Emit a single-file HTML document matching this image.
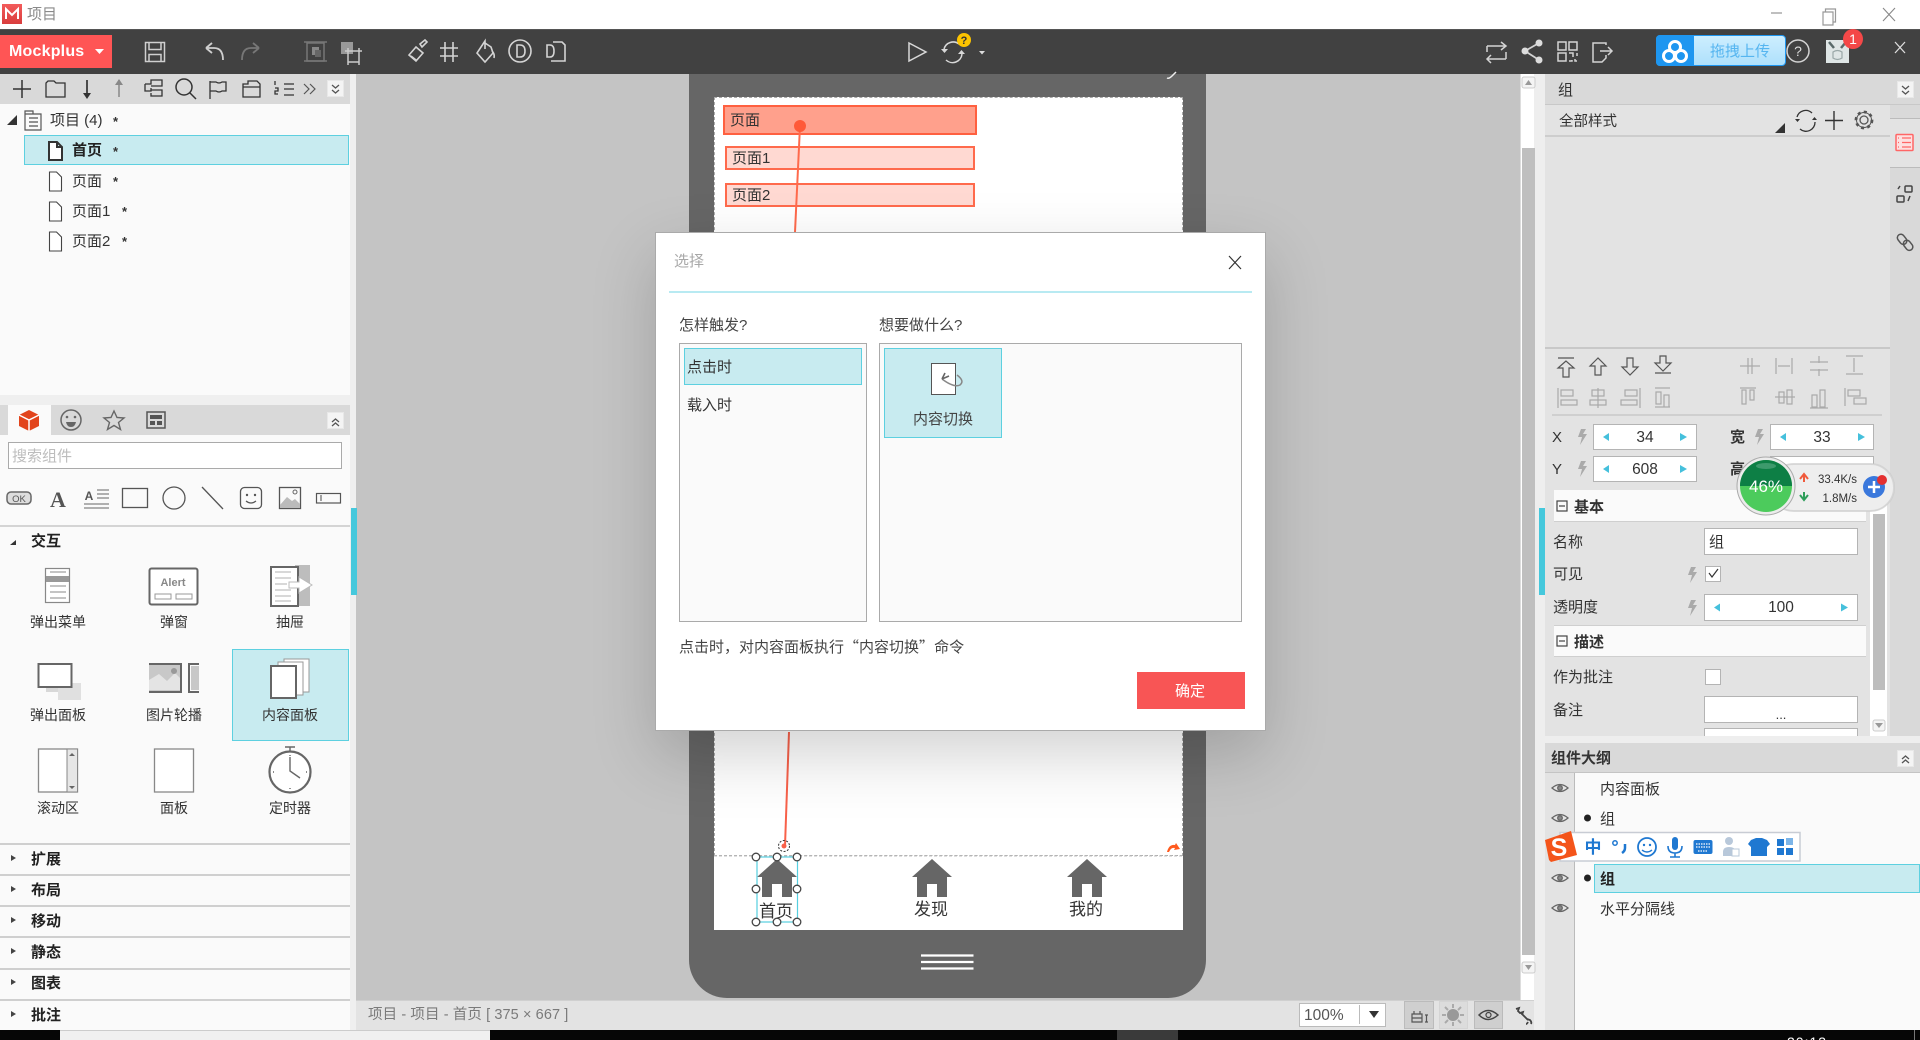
<!DOCTYPE html>
<html lang="zh"><head><meta charset="utf-8"><title>项目</title>
<style>
html,body{margin:0;padding:0;background:#000;}
#app{position:relative;width:1920px;height:1040px;overflow:hidden;background:#c4c4c4;font-family:"Liberation Sans","Noto Sans CJK SC",sans-serif;font-size:15px;color:#333;filter:blur(.35px);}
.b{position:absolute;box-sizing:border-box;}
.t{position:absolute;line-height:20px;height:20px;white-space:nowrap;margin-top:1px;}
.c{transform:translateX(-50%);}
.g{font-size:14px;}
.s{font-size:13px;font-weight:700;}
.bd{font-weight:700;color:#222;}
.inp{position:absolute;box-sizing:border-box;background:#fff;border:1.5px solid #b4b4b4;}
.sel{position:absolute;box-sizing:border-box;background:#c8ebf0;border:1.5px solid #5dd0e0;}
.chev{position:absolute;box-sizing:border-box;width:17px;height:17px;background:#f4f4f4;border:1px solid #e8e8e8;}
svg{position:absolute;left:0;top:0;overflow:visible;}
</style></head><body>
<div id="app">
<!-- title bar -->
<div class="b" style="left:0;top:0;width:1920px;height:29px;background:#fff"></div>
<div class="b" style="left:2px;top:4px;width:20px;height:20px;background:linear-gradient(#f35b5b,#d83d3d)"></div>
<div class="t" style="left:27px;top:4px;color:#8a8a8a;font-size:15px">项目</div>
<!-- toolbar -->
<div class="b" style="left:0;top:29px;width:1920px;height:45px;background:#414141;border-top:1px solid #555"></div>
<div class="b" style="left:0;top:35px;width:112px;height:33px;background:#ff5555"></div>
<div class="t" style="left:9px;top:41px;color:#fff;font-weight:700;font-size:16px;letter-spacing:.2px">Mockplus</div>
<div class="b" style="left:1656px;top:35px;width:130px;height:31px;background:linear-gradient(#cdeeff,#aee0fb);border:1.5px solid #1e96f0;border-radius:4px"></div>
<div class="b" style="left:1656px;top:35px;width:38px;height:31px;background:#1e96f0;border-radius:4px 0 0 4px"></div>
<div class="t" style="left:1710px;top:41px;color:#55b5f0;font-size:15px">拖拽上传</div>
<!-- left panel -->
<div class="b" style="left:0;top:74px;width:350px;height:956px;background:#fafafa"></div>
<div class="b" style="left:350px;top:74px;width:6px;height:956px;background:#efefef"></div>
<div class="b" style="left:0;top:74px;width:350px;height:30px;background:#d9d9d9"></div>
<div class="chev" style="left:327px;top:80px"></div>
<div class="t" style="left:50px;top:110px">项目 (4)</div>
<div class="t s" style="left:113px;top:111px">*</div>
<div class="sel" style="left:24px;top:135px;width:325px;height:30px;border-width:1.5px"></div>
<div class="t bd" style="left:72px;top:140px">首页</div>
<div class="t s" style="left:113px;top:141px">*</div>
<div class="t" style="left:72px;top:171px">页面</div>
<div class="t s" style="left:113px;top:171px">*</div>
<div class="t" style="left:72px;top:201px">页面1</div>
<div class="t s" style="left:122px;top:201px">*</div>
<div class="t" style="left:72px;top:231px">页面2</div>
<div class="t s" style="left:122px;top:231px">*</div>
<div class="b" style="left:0;top:395px;width:350px;height:10px;background:#efefef"></div>
<div class="b" style="left:0;top:405px;width:350px;height:30px;background:#d9d9d9"></div>
<div class="b" style="left:8px;top:405px;width:43px;height:30px;background:#fafafa"></div>
<div class="chev" style="left:327px;top:412px"></div>
<div class="inp" style="left:8px;top:442px;width:334px;height:27px;border-color:#aaa"></div>
<div class="t" style="left:12px;top:446px;color:#bdbdbd">搜索组件</div>
<div class="b" style="left:0;top:525px;width:350px;height:2px;background:#d4d4d4"></div>
<div class="t bd" style="left:31px;top:531px">交互</div>
<div class="sel" style="left:232px;top:649px;width:117px;height:92px"></div>
<div class="t c g" style="left:58px;top:611px">弹出菜单</div>
<div class="t c g" style="left:174px;top:611px">弹窗</div>
<div class="t c g" style="left:290px;top:611px">抽屉</div>
<div class="t c g" style="left:58px;top:704px">弹出面板</div>
<div class="t c g" style="left:174px;top:704px">图片轮播</div>
<div class="t c g" style="left:290px;top:704px">内容面板</div>
<div class="t c g" style="left:58px;top:797px">滚动区</div>
<div class="t c g" style="left:174px;top:797px">面板</div>
<div class="t c g" style="left:290px;top:797px">定时器</div>
<div class="b" style="left:0;top:843px;width:350px;height:1.5px;background:#cfcfcf"></div>
<div class="b" style="left:0;top:874px;width:350px;height:1.5px;background:#cfcfcf"></div>
<div class="b" style="left:0;top:905px;width:350px;height:1.5px;background:#cfcfcf"></div>
<div class="b" style="left:0;top:936px;width:350px;height:1.5px;background:#cfcfcf"></div>
<div class="b" style="left:0;top:968px;width:350px;height:1.5px;background:#cfcfcf"></div>
<div class="b" style="left:0;top:999px;width:350px;height:1.5px;background:#cfcfcf"></div>
<div class="t bd" style="left:31px;top:849px">扩展</div>
<div class="t bd" style="left:31px;top:880px">布局</div>
<div class="t bd" style="left:31px;top:911px">移动</div>
<div class="t bd" style="left:31px;top:942px">静态</div>
<div class="t bd" style="left:31px;top:973px">图表</div>
<div class="t bd" style="left:31px;top:1005px">批注</div>
<div class="b" style="left:351px;top:508px;width:6px;height:87px;background:#45c8dc"></div>

<!-- canvas & phone -->
<div class="b" style="left:689px;top:74px;width:517px;height:924px;background:#666;border-radius:0 0 38px 38px"></div>
<div class="b" style="left:714px;top:97px;width:468.5px;height:833px;background:#fff"></div>
<div class="b" style="left:714px;top:97px;width:468.5px;height:759px;border:1px dashed #aaa"></div>
<div class="b" style="left:723px;top:105px;width:254px;height:30px;background:#ffa08c;border:2.5px solid #ff6040"></div>
<div class="t" style="left:730px;top:110px;color:#333;font-size:15px">页面</div>
<div class="b" style="left:725px;top:146px;width:250px;height:24px;background:#ffd9d2;border:2.5px solid #ff6a4c"></div>
<div class="t" style="left:732px;top:148px;font-size:15px">页面1</div>
<div class="b" style="left:725px;top:183px;width:250px;height:24px;background:#ffd9d2;border:2.5px solid #ff6a4c"></div>
<div class="t" style="left:732px;top:185px;font-size:15px">页面2</div>
<div class="t c" style="left:776px;top:901px;font-size:17px;color:#333">首页</div>
<div class="t c" style="left:931px;top:899px;font-size:17px;color:#333">发现</div>
<div class="t c" style="left:1086px;top:899px;font-size:17px;color:#333">我的</div>

<!-- status bar -->
<div class="b" style="left:356px;top:1000px;width:1189px;height:30px;background:#e3e3e3;border-top:1px solid #d0d0d0"></div>
<div class="t" style="left:368px;top:1004px;color:#7a7a7a;font-size:14.5px;letter-spacing:.1px">项目 - 项目 - 首页 [ 375 × 667 ]</div>
<div class="inp" style="left:1299px;top:1003px;width:87px;height:24px;border-color:#bbb"></div>
<div class="t" style="left:1304px;top:1005px;color:#555;font-size:15.5px">100%</div>
<div class="b" style="left:1359px;top:1005px;width:1px;height:19px;background:#bbb"></div>
<div class="b" style="left:1404px;top:1001px;width:30px;height:28px;background:#cfcfcf;border:1px solid #bbb"></div>
<div class="b" style="left:1439px;top:1001px;width:29px;height:28px;background:#dcdcdc;border:1px solid #d4d4d4"></div>
<div class="b" style="left:1474px;top:1001px;width:29px;height:28px;background:#cfcfcf;border:1px solid #bbb"></div>

<!-- canvas scrollbar -->
<div class="b" style="left:1520px;top:74px;width:15px;height:926px;background:#fff;border-left:1px solid #ddd"></div>
<div class="b" style="left:1534px;top:74px;width:11px;height:956px;background:#eee"></div>
<div class="b" style="left:1522px;top:148px;width:13px;height:807px;background:#bfbfbf"></div>

<!-- right panel -->
<div class="b" style="left:1545px;top:74px;width:375px;height:662px;background:#e3e3e3"></div>
<div class="b" style="left:1890px;top:105px;width:30px;height:631px;background:#d9d9d9"></div>
<div class="b" style="left:1890px;top:118px;width:30px;height:50px;background:#e3e3e3;border-top:1px solid #bbb;border-bottom:1px solid #bbb"></div>
<div class="b" style="left:1545px;top:74px;width:375px;height:31px;background:#d9d9d9;border-bottom:1.5px solid #c8c8c8"></div>
<div class="t" style="left:1558px;top:80px;font-size:15px">组</div>
<div class="chev" style="left:1897px;top:81px"></div>
<div class="t" style="left:1559px;top:111px;font-size:14.5px">全部样式</div>
<div class="b" style="left:1545px;top:135px;width:345px;height:2px;background:#cdcdcd"></div>
<div class="b" style="left:1545px;top:347px;width:345px;height:1.5px;background:#c8c8c8"></div>
<div class="b" style="left:1552px;top:414px;width:330px;height:1.5px;background:#cfcfcf"></div>
<div class="t" style="left:1552px;top:427px;font-size:15px">X</div>
<div class="t" style="left:1552px;top:459px;font-size:15px">Y</div>
<div class="inp" style="left:1593px;top:424px;width:104px;height:26px"></div>
<div class="t c" style="left:1645px;top:427px;font-size:15.5px">34</div>
<div class="t bd" style="left:1730px;top:427px;color:#333">宽</div>
<div class="inp" style="left:1770px;top:424px;width:104px;height:26px"></div>
<div class="t c" style="left:1822px;top:427px;font-size:15.5px">33</div>
<div class="inp" style="left:1593px;top:456px;width:104px;height:26px"></div>
<div class="t c" style="left:1645px;top:459px;font-size:15.5px">608</div>
<div class="t bd" style="left:1730px;top:459px;color:#333">高</div>
<div class="inp" style="left:1770px;top:456px;width:104px;height:26px"></div>
<div class="b" style="left:1554px;top:490px;width:312px;height:32px;background:#fafafa;border-bottom:1.5px solid #cfcfcf"></div>
<div class="t bd" style="left:1574px;top:497px;color:#333">基本</div>
<div class="t" style="left:1553px;top:532px">名称</div>
<div class="inp" style="left:1704px;top:528px;width:154px;height:27px"></div>
<div class="t" style="left:1709px;top:532px">组</div>
<div class="t" style="left:1553px;top:564px">可见</div>
<div class="inp" style="left:1705px;top:566px;width:16px;height:16px"></div>
<div class="t" style="left:1553px;top:597px">透明度</div>
<div class="inp" style="left:1704px;top:594px;width:154px;height:26.5px"></div>
<div class="t c" style="left:1781px;top:597px;font-size:15.5px">100</div>
<div class="b" style="left:1554px;top:625px;width:312px;height:32px;background:#fafafa;border-bottom:1.5px solid #cfcfcf;border-top:1.5px solid #cfcfcf"></div>
<div class="t bd" style="left:1574px;top:632px;color:#333">描述</div>
<div class="t" style="left:1553px;top:667px">作为批注</div>
<div class="inp" style="left:1705px;top:669px;width:16px;height:16px"></div>
<div class="t" style="left:1553px;top:700px">备注</div>
<div class="inp" style="left:1704px;top:696px;width:154px;height:27px"></div>
<div class="t c" style="left:1781px;top:704px;font-size:13px">...</div>
<div class="inp" style="left:1704px;top:728px;width:154px;height:9px;border-bottom:0"></div>
<div class="b" style="left:1870px;top:500px;width:17px;height:236px;background:#fff"></div>
<div class="b" style="left:1873px;top:514px;width:12px;height:176px;background:#bdbdbd"></div>
<div class="b" style="left:1539px;top:508px;width:6px;height:87px;background:#45c8dc"></div>
<div class="b" style="left:1545px;top:736px;width:375px;height:7px;background:#eee"></div>
<!-- outline -->
<div class="b" style="left:1545px;top:743px;width:375px;height:30px;background:#d9d9d9;border-bottom:1.5px solid #c4c4c4"></div>
<div class="t bd" style="left:1551px;top:748px;color:#333">组件大纲</div>
<div class="chev" style="left:1897px;top:750px"></div>
<div class="b" style="left:1545px;top:773px;width:30px;height:257px;background:#e3e3e3;border-right:1.5px solid #bbb"></div>
<div class="b" style="left:1575px;top:773px;width:345px;height:257px;background:#fafafa"></div>
<div class="t" style="left:1600px;top:779px">内容面板</div>
<div class="t" style="left:1600px;top:809px">组</div>
<div class="sel" style="left:1594px;top:864px;width:326px;height:29px"></div>
<div class="t bd" style="left:1600px;top:869px">组</div>
<div class="t" style="left:1600px;top:899px">水平分隔线</div>

<!-- bottom taskbar -->
<div class="b" style="left:0;top:1030px;width:1920px;height:10px;background:#060606"></div>
<div class="b" style="left:60px;top:1030px;width:430px;height:10px;background:#f0f0f0;border-top:1px solid #ccc"></div>
<div class="b" style="left:1117px;top:1030px;width:61px;height:10px;background:#3a3a3a"></div>
<div class="b" style="left:1914px;top:1030px;width:1px;height:10px;background:#777"></div>
<div class="t" style="left:1787px;top:1031px;color:#fff;font-size:14px;letter-spacing:1px">20:13</div>

<!-- ICONS -->
<svg width="1920" height="1040" viewBox="0 0 1920 1040" fill="none">
<!-- title M -->
<path d="M6 19V9l6 6 6-6v10" stroke="#fff" stroke-width="2"/>
<path d="M1771 13h11M1823 12h10v13h-10zM1825.500 12V9h10v13h-2.500" stroke="#999" stroke-width="1.200"/>
<path d="M1883 8l12 13M1895 8l-12 13" stroke="#888" stroke-width="1.100"/>
<path d="M95 49h9l-4.500 5z" fill="#fff"/>
<!-- toolbar left icons -->
<g stroke="#cfcfcf" stroke-width="1.500">
<path d="M145.500 42.500h19v19h-19zM149 42.500v7h12v-7M149 61.500v-7h12v7"/>
<path d="M206 48l6-5M206 48l6 5M206 48h8q9 0 9 12" stroke-width="1.800"/>
</g>
<path d="M259 48l-6-5M259 48l-6 5M259 48h-8q-9 0-9 12" stroke="#777" stroke-width="1.800"/>
<g stroke="#777" stroke-width="1.500"><rect x="307" y="43" width="17" height="18"/><path d="M304 42h23M304 61h23"/></g>
<rect x="312" y="47" width="7" height="8" fill="#888"/><rect x="315" y="50" width="6" height="7" fill="#666"/>
<rect x="341" y="42" width="12" height="12" fill="#999"/>
<g stroke="#ccc" stroke-width="1.500"><path d="M348 51h11v11h-11zM345 51h17M348 48v17M359 48v17"/></g>
<g stroke="#d4d4d4" stroke-width="1.600">
<path d="M420 44l5-4 2 2-5 5zM416 47l7 6-7 8-7-6zM411 56l5 4"/>
<path d="M445 42v20M453 42v20M440 48h18M440 56h18"/>
<path d="M485 41l-8 12 8 9 8-9-2-6-6-4zM485 41v8M492 51q3 3 2 7"/>
<circle cx="520" cy="51" r="11"/>
<path d="M517 45h3q5 0 5 6t-5 6h-3z"/>
<path d="M553 42h9l3 3v16h-14M547 45v12h3q4 0 4-6t-4-6z"/>
</g>
<!-- play / sync -->
<path d="M909 43l17 9-17 9z" stroke="#d8d8d8" stroke-width="1.500"/>
<path d="M944 49a9.500 9.500 0 0 1 15-5M962 54a9.500 9.500 0 0 1-16 6" stroke="#d8d8d8" stroke-width="1.500"/>
<path d="M941 49h7l-3.500 4zM958 54h7l-3.500-4z" fill="#d8d8d8"/>
<circle cx="964" cy="40" r="7" fill="#fdc400"/>
<text x="964" y="44" text-anchor="middle" font-size="11" font-weight="700" fill="#333" font-family="Liberation Sans">?</text>
<path d="M979 51h6l-3 3.500z" fill="#ddd"/>
<!-- right toolbar -->
<g stroke="#d4d4d4" stroke-width="1.500">
<path d="M1487 46h19M1501 42l5 4-5 4M1487 46v6M1506 52v7M1487 59h19M1491 55l-4 4 4 4"/>
<path d="M1525 51l14-8M1525 51l14 9" stroke-width="1.800"/>
<rect x="1558" y="42" width="8" height="8"/><rect x="1569" y="42" width="8" height="8"/><rect x="1558" y="53" width="8" height="8"/>
<path d="M1569 53h4v4M1577 53v3M1569 61h3v-1M1575 59v2h2"/>
<path d="M1606 45v-2h-13v19h9l4-4v-3M1600 51h12M1608 47l4 4-4 4"/>
<circle cx="1798" cy="51" r="11"/>
</g>
<circle cx="1525" cy="51" r="3.500" fill="#ddd"/><circle cx="1539" cy="43" r="3.500" fill="#ddd"/><circle cx="1539" cy="60" r="3.500" fill="#ddd"/>
<text x="1798" y="56" text-anchor="middle" font-size="14" fill="#ddd" font-family="Liberation Sans">?</text>
<g stroke="#fff" stroke-width="3"><circle cx="1675" cy="47" r="5.500"/><circle cx="1669" cy="56" r="5.500"/><circle cx="1681" cy="56" r="5.500"/></g>
<rect x="1826" y="40" width="23" height="23" fill="#dfe6e6"/>
<path d="M1829 42l5 6M1846 42l-5 6" stroke="#5a6a6a" stroke-width="2.500"/>
<path d="M1833 52q4.500-3 9 0v6q-4.500 3-9 0z" stroke="#9aa8a8" stroke-width="1.200"/>
<circle cx="1853" cy="39" r="10" fill="#f44848"/>
<text x="1853" y="44" text-anchor="middle" font-size="14" fill="#fff" font-family="Liberation Sans">1</text>
<path d="M1895 42l10 11M1905 42l-10 11" stroke="#ddd" stroke-width="1.300"/>
<!-- left toolbar -->
<g stroke="#333" stroke-width="1.500">
<path d="M22 80v18M13 89h18"/>
<path d="M46 97V83l2-2h6l2 2h9v14z" stroke-width="1.300"/>
<path d="M87 80v15" stroke-width="1.700"/>
<path d="M145 84h6v-4h11v6h-11M145 84v7h6v-3M151 90h11v6h-11v-3" stroke-width="1.300"/>
<circle cx="184" cy="87" r="8"/><path d="M190 93l6 6"/>
<path d="M210 81v18M210 82h6q3 2 6 0h4v9h-4q-3 2-6 0h-6" stroke-width="1.300"/>
<path d="M243 97V84h5v-3h9l3 3v13zM243 87h17" stroke-width="1.300"/>
<path d="M284 84h10M284 89h10M284 95h10M275 81v4M275 88h3v3h-3v3h3" stroke-width="1.300"/>
<path d="M304 84l5 5-5 5M310 84l5 5-5 5" stroke="#555" stroke-width="1.200"/>
</g>
<path d="M83 93h8l-4 6z" fill="#333"/>
<path d="M119 80v17" stroke="#888" stroke-width="1.500"/><path d="M115 85h8l-4-6z" fill="#888"/>
<path d="M332 85l3.500 3 3.500-3M332 90l3.500 3 3.500-3" stroke="#555" stroke-width="1.300"/>
<path d="M332 422l3.500-3 3.500 3M332 426l3.500-3 3.500 3" stroke="#555" stroke-width="1.300"/>
<path d="M1902 86l3.500 3 3.500-3M1902 91l3.500 3 3.500-3" stroke="#555" stroke-width="1.300"/>
<path d="M1902 759l3.500-3 3.500 3M1902 763l3.500-3 3.500 3" stroke="#555" stroke-width="1.300"/>
<!-- tree -->
<path d="M7 125h10v-10z" fill="#333"/>
<path d="M25 114h16v16H25zM25 114v-3h8v3M29 118h9M29 122h9M29 126h9" stroke="#555" stroke-width="1.200"/>
<path d="M49 142h8l5 5v13H49zM57 142v5h5" stroke="#333" stroke-width="2" fill="#fff"/>
<g stroke="#444" stroke-width="1.100" fill="#fff">
<path d="M49.500 172h7l5 5v14h-12z"/><path d="M49.500 202h7l5 5v14h-12z"/><path d="M49.500 232h7l5 5v14h-12z"/>
</g>
<!-- component tabs -->
<path d="M29 410l10 5v11l-10 5-10-5v-11z" fill="#e2441c"/>
<path d="M19 415l10 5 10-5M29 420v11" stroke="#fff" stroke-width="1.500"/>
<circle cx="71" cy="420" r="10" stroke="#666" stroke-width="1.500"/>
<path d="M66 422h10q-1 5-5 5t-5-5z" fill="#666"/><circle cx="67" cy="417" r="1.300" fill="#666"/><circle cx="75" cy="417" r="1.300" fill="#666"/>
<path d="M114 411l3 6.500 7 .5-5.500 4.500 2 7-6.500-4-6.500 4 2-7-5.500-4.500 7-.5z" stroke="#666" stroke-width="1.400"/>
<rect x="147" y="412" width="18" height="16" stroke="#555" stroke-width="1.500"/>
<rect x="150" y="415" width="12" height="4" fill="#555"/><rect x="150" y="421" width="5" height="4" fill="#555"/><rect x="157" y="421" width="5" height="4" fill="#555"/>
<!-- basic shapes -->
<rect x="7" y="492" width="24" height="12" rx="4" stroke="#666" stroke-width="1.500" fill="#ddd"/>
<text x="19" y="502" text-anchor="middle" font-size="9.500" fill="#555" font-family="Liberation Sans">OK</text>
<text x="58" y="507" text-anchor="middle" font-size="22" fill="#555" font-weight="700" font-family="Liberation Serif">A</text>
<text x="89" y="500" text-anchor="middle" font-size="12" fill="#555" font-weight="700" font-family="Liberation Sans">A</text>
<g stroke="#666" stroke-width="1.100"><path d="M84 504h25M84 508h25M97 490h12M97 494h12M97 498h12"/></g>
<rect x="122.500" y="488.500" width="25" height="19" stroke="#555" stroke-width="1.300"/>
<circle cx="174" cy="498" r="11" stroke="#555" stroke-width="1.300"/>
<path d="M202 487l21 22" stroke="#555" stroke-width="1.300"/>
<rect x="240.500" y="487.500" width="21" height="21" rx="4" stroke="#555" stroke-width="1.300"/>
<circle cx="247" cy="495" r="1.200" fill="#555"/><circle cx="255" cy="495" r="1.200" fill="#555"/><path d="M246 501q5 4 10 0" stroke="#555" stroke-width="1.200"/>
<rect x="279.500" y="487.500" width="21" height="21" stroke="#555" stroke-width="1.300"/>
<path d="M280 505l7-8 5 4 3-2 5 5v4h-20z" fill="#bbb"/><circle cx="295" cy="492" r="2" stroke="#666"/>
<rect x="316.500" y="493.500" width="24" height="9.500" stroke="#555" stroke-width="1.200"/>
<path d="M321 495v6" stroke="#666" stroke-width="1.200"/>
<!-- triangle markers -->
<path d="M10 545h6v-5z" fill="#333"/>
<g fill="#444"><path d="M11 855v6l5-3z"/><path d="M11 886v6l5-3z"/><path d="M11 917v6l5-3z"/><path d="M11 948v6l5-3z"/><path d="M11 979v6l5-3z"/><path d="M11 1011v6l5-3z"/></g>
<!-- components -->
<rect x="45.500" y="568.500" width="24" height="34" fill="#fff" stroke="#888" stroke-width="1.200"/>
<rect x="46" y="576" width="23" height="6" fill="#999"/>
<path d="M50 572h16M50 586h16M50 592h16M50 598h16" stroke="#888"/>
<rect x="149.500" y="568.500" width="48" height="36" rx="2" fill="#fff" stroke="#666" stroke-width="2"/>
<text x="173" y="586" text-anchor="middle" font-size="11" font-weight="700" fill="#888" font-family="Liberation Sans">Alert</text>
<rect x="155" y="594" width="16" height="5" stroke="#999"/><rect x="176" y="594" width="16" height="5" stroke="#999"/>
<rect x="295" y="565" width="15" height="41" fill="#bdbdbd"/>
<rect x="271" y="567" width="27" height="39" fill="#fff" stroke="#666" stroke-width="2"/>
<path d="M275 572h16M275 578h16M275 584h12M275 590h16M275 596h16M275 601h16" stroke="#ccc" stroke-width="1.500"/>
<path d="M289 582h10v-5l13 8-13 8v-5h-10z" fill="#fff" stroke="#bbb"/>
<rect x="46" y="672" width="26" height="20" fill="#d8d8d8"/><rect x="58" y="683" width="23" height="17" fill="#e0e0e0"/>
<rect x="38.500" y="664" width="33" height="23" fill="#fff" stroke="#666" stroke-width="2"/>
<rect x="149" y="664" width="33" height="28" fill="#c8c8c8"/>
<path d="M149 680l10-6 8 7 8-8 7 7v10h-33z" fill="#fff" opacity=".5"/>
<path d="M149 664h32v28h-32" stroke="#666" stroke-width="2"/><circle cx="174" cy="671" r="3" fill="#999"/>
<path d="M199 664h-10v28h10" stroke="#666" stroke-width="2"/><rect x="191" y="666" width="8" height="24" fill="#c8c8c8"/>
<rect x="284" y="659" width="25" height="33" fill="#fff" stroke="#999"/>
<rect x="278" y="662" width="25" height="33" fill="#fff" stroke="#999"/>
<rect x="271" y="666" width="25" height="32" fill="#fff" stroke="#666" stroke-width="2"/>
<rect x="38.500" y="749" width="39" height="43" fill="#fff" stroke="#888" stroke-width="1.300"/>
<rect x="67" y="749" width="10.500" height="43" fill="#e6e6e6" stroke="#888"/>
<path d="M69 756l3-3 3 3zM69 786l3 3 3-3z" fill="#666"/>
<rect x="154.500" y="749" width="39" height="43" fill="#fff" stroke="#888" stroke-width="1.300"/>
<circle cx="290" cy="772" r="20.500" fill="#fff" stroke="#666" stroke-width="2.200"/>
<path d="M285 747h10M290 747v4M290 757v14l10 7M290 755v1M290 789v-1M273 772h1M307 772h-1" stroke="#666" stroke-width="1.400"/>
<!-- red connectors -->
<path d="M800 126L795 232" stroke="#ff6a4c" stroke-width="2"/>
<circle cx="800" cy="126" r="6" fill="#ff5a38"/>
<path d="M1172 76q-3 3-5 2M1176 72l-4 4" stroke="#eee" stroke-width="1.500"/>
<path d="M789 732L785 846" stroke="#f8614a" stroke-width="2"/>
<circle cx="784" cy="846" r="5.500" stroke="#333" stroke-dasharray="2 1.500"/><circle cx="784" cy="846" r="2.500" fill="#f8614a"/>
<path d="M1167 852q2-8 8-7l1-2 4 6-6 1 1-2q-4-1-6 4z" fill="#ff5a1e"/>
<!-- tab bar -->
<path d="M714 856h468" stroke="#c0c0c0" stroke-dasharray="3 2"/>
<g fill="#666">
<path d="M777 859l20 18h-5v20h-10v-13h-10v13h-10v-20h-5z"/>
<path d="M932 859l20 18h-5v20h-10v-13h-10v13h-10v-20h-5z"/>
<path d="M1087 859l20 18h-5v20h-10v-13h-10v13h-10v-20h-5z"/>
</g>
<rect x="757" y="857" width="40.500" height="65" stroke="#55cfe0" stroke-width="1.200"/>
<g fill="#fff" stroke="#444" stroke-width="1.300">
<circle cx="756" cy="857" r="3.800"/><circle cx="777" cy="857" r="3.800"/><circle cx="797" cy="857" r="3.800"/>
<circle cx="756" cy="889" r="3.800"/><circle cx="797" cy="889" r="3.800"/>
<circle cx="756" cy="922" r="3.800"/><circle cx="777" cy="922" r="3.800"/><circle cx="797" cy="922" r="3.800"/>
</g>
<path d="M921 955.500h52.500M921 962h52.500M921 968.500h52.500" stroke="#fff" stroke-width="2.200"/>
<!-- status -->
<path d="M1369 1011h10l-5 7z" fill="#333"/>
<path d="M1412 1014h10v8h-10zM1412 1018h10M1414 1014v-3M1420 1014v-3M1425 1015h3M1425 1022h3M1426.500 1015v7" stroke="#555" stroke-width="1.200"/>
<circle cx="1453" cy="1015" r="6" fill="#999"/>
<path d="M1453 1004v4M1453 1022v4M1442 1015h4M1460 1015h4M1445 1007l3 3M1458 1020l3 3M1461 1007l-3 3M1448 1020l-3 3" stroke="#aaa" stroke-width="2"/>
<path d="M1479 1015q9-9 19 0q-10 9-19 0z" stroke="#444" stroke-width="1.500"/><circle cx="1488.500" cy="1015" r="2.500" stroke="#444" stroke-width="1.200"/>
<path d="M1521 1013l7 7M1516 1009l3-1-1 3 2 2 3-1-1 3M1527 1019l3 1q2 2 1 4M1526 1024q1 0 2-2" stroke="#444" stroke-width="1.800"/>
<!-- scroll arrows -->
<rect x="1522" y="77" width="13" height="11" rx="2" fill="#f4f4f4" stroke="#ccc"/>
<path d="M1525 85h7l-3.500-5z" fill="#999"/>
<rect x="1522" y="962" width="13" height="11" rx="2" fill="#f4f4f4" stroke="#ccc"/>
<path d="M1525 965h7l-3.500 5z" fill="#999"/>
<rect x="1873" y="720" width="12" height="11" rx="2" fill="#f4f4f4" stroke="#ccc"/>
<path d="M1875 723h8l-4 5z" fill="#999"/>
<!-- right header -->
<path d="M1775 133h10v-10z" fill="#333"/>
<path d="M1797 117a9 9 0 0 1 15-4M1815 122a9 9 0 0 1-15 7" stroke="#333" stroke-width="1.300"/>
<path d="M1795 119h5l-2.500 3zM1812 120h5l-2.500-3z" fill="#333"/>
<path d="M1834 111v19M1825 120.500h18" stroke="#333" stroke-width="1.400"/>
<circle cx="1864" cy="120" r="4" stroke="#555" stroke-width="1.300"/>
<circle cx="1864" cy="120" r="8" stroke="#555" stroke-width="2.800" stroke-dasharray="3 3.200"/>
<circle cx="1864" cy="120" r="7.500" stroke="#555" stroke-width="1"/>
<rect x="1896" y="134.500" width="17" height="16" rx="1" stroke="#f66" stroke-width="1.500" fill="#fde0e0"/>
<path d="M1902 138h9M1902 142.500h9M1902 147h9M1898 138h1M1898 142.500h1M1898 147h1" stroke="#f66" stroke-width="1.300"/>
<rect x="1905" y="186" width="7" height="6" rx="1" stroke="#444" stroke-width="1.500"/>
<rect x="1897" y="196" width="7" height="6" rx="1" stroke="#444" stroke-width="1.500"/>
<path d="M1900 186l-2 3M1910 196l-2 5" stroke="#444" stroke-width="1.500"/>
<g stroke="#555" stroke-width="1.500">
<rect x="1899" y="234" width="7" height="11" rx="3.500" transform="rotate(-38 1902 240)"/>
<rect x="1905" y="240" width="7" height="11" rx="3.500" transform="rotate(-38 1908 246)"/>
</g>
<!-- align icons -->
<g stroke="#555" stroke-width="1.200">
<path d="M1558 358h16M1566 361l-8 7h5v9h6v-9h5z"/>
<path d="M1598 358l-8 8h5v9h6v-9h5z"/>
<path d="M1630 375l-8-8h5v-9h6v9h5z"/>
<path d="M1663 371l-8-8h5v-7h6v7h5zM1655 373h16"/>
</g>
<g stroke="#aaa" stroke-width="1.200">
<path d="M1740 366h20M1748 358v16M1752 358v16M1776 358v16M1792 358v16M1778 366h12M1819 356v7M1819 369v7M1810 362h18M1810 370h18M1846 356h17M1846 374h17M1854 358v14"/>
<path d="M1558 388v20M1561 390h12v6h-12zM1561 400h16v5h-16zM1598 388v20M1592 390h12v6h-12zM1590 400h16v5h-16zM1640 388v20M1625 390h12v6h-12zM1621 400h16v5h-16zM1655 388h15M1655 407h15M1656 392h5v12h-5zM1664 395h5v12h-5zM1740 388h16M1742 390h4v14h-4zM1750 390h4v10h-4z"/>
<path d="M1775 397h20M1779 392h5v11h-5zM1787 390h5v14h-5zM1810 408h18M1812 395h5v12h-5zM1820 390h5v17h-5zM1845 388v18M1848 390h12v6h-12zM1854 398h12v6h-12z"/>
</g>
<!-- lightnings -->
<g fill="#aaa">
<path d="M1581 429h5l-3 5h4l-7 11 2-8h-4z"/><path d="M1581 461h5l-3 5h4l-7 11 2-8h-4z"/>
<path d="M1758 429h5l-3 5h4l-7 11 2-8h-4z"/>
<path d="M1691 567h5l-3 5h4l-7 11 2-8h-4z"/><path d="M1691 600h5l-3 5h4l-7 11 2-8h-4z"/>
</g>
<g fill="#45c0dc">
<path d="M1609 433v8l-6-4zM1680 433v8l7-4z"/><path d="M1786 433v8l-6-4zM1858 433v8l7-4z"/>
<path d="M1609 465v8l-6-4zM1680 465v8l7-4z"/>
<path d="M1720 603.500v8l-6-4zM1841 603.500v8l7-4z"/>
</g>
<path d="M1709 573l3 4 6-8" stroke="#333" stroke-width="1.200"/>
<rect x="1557" y="501" width="10" height="10" stroke="#444" stroke-width="1.200"/><path d="M1559 506h6" stroke="#444" stroke-width="1.200"/>
<rect x="1557" y="636" width="10" height="10" stroke="#444" stroke-width="1.200"/><path d="M1559 641h6" stroke="#444" stroke-width="1.200"/>
<!-- eyes -->
<g stroke="#666" stroke-width="1.300">
<path d="M1552 788q8-7 16 0q-8 7-16 0z"/><circle cx="1560" cy="788" r="2.300" fill="#888"/>
<path d="M1552 818q8-7 16 0q-8 7-16 0z"/><circle cx="1560" cy="818" r="2.300" fill="#888"/>
<path d="M1552 878q8-7 16 0q-8 7-16 0z"/><circle cx="1560" cy="878" r="2.300" fill="#888"/>
<path d="M1552 908q8-7 16 0q-8 7-16 0z"/><circle cx="1560" cy="908" r="2.300" fill="#888"/>
</g>
<circle cx="1587.500" cy="818" r="3.500" fill="#222"/><circle cx="1587.500" cy="878" r="3.500" fill="#222"/>
</svg>

<!-- dialog -->
<div class="b" style="left:655px;top:232px;width:611px;height:499px;background:#fff;border:1.5px solid #aaa;box-shadow:0 24px 60px rgba(0,0,0,.18)"></div>
<div class="t" style="left:674px;top:251px;color:#a8a8a8">选择</div>
<div class="b" style="left:669px;top:291px;width:583px;height:1.5px;background:#b8eaf2"></div>
<div class="t" style="left:679px;top:315px;color:#444">怎样触发?</div>
<div class="t" style="left:879px;top:315px;color:#444">想要做什么?</div>
<div class="b" style="left:679px;top:343px;width:188px;height:279px;background:#fafafa;border:1.5px solid #aaa"></div>
<div class="sel" style="left:684px;top:348px;width:177.5px;height:37px"></div>
<div class="t" style="left:687px;top:357px">点击时</div>
<div class="t" style="left:687px;top:395px">载入时</div>
<div class="b" style="left:879px;top:343px;width:362.5px;height:279px;background:#fafafa;border:1.5px solid #aaa"></div>
<div class="sel" style="left:884px;top:348px;width:117.5px;height:89.5px"></div>
<div class="b" style="left:931px;top:363px;width:25px;height:32px;background:#fff;border:1.5px solid #555"></div>
<div class="t c" style="left:943px;top:409px;color:#444">内容切换</div>
<div class="t" style="left:679px;top:636px;color:#444;font-size:15px">点击时，对内容面板执行<span style="font-family:'Noto Sans CJK SC',sans-serif">“</span>内容切换<span style="font-family:'Noto Sans CJK SC',sans-serif">”</span>命令</div>
<div class="b" style="left:1136.5px;top:672px;width:108px;height:37px;background:#f85555"></div>
<div class="t c" style="left:1190px;top:681px;color:#fff">确定</div>
<svg width="1920" height="1040" viewBox="0 0 1920 1040" fill="none">
<path d="M1229 256l12 13M1241 256l-12 13" stroke="#333" stroke-width="1.200"/>
<path d="M957 375q8 6 3 10q-6 3-18-6" stroke="#888" stroke-width="1.500"/>
<path d="M942 379l7-3M942 379l3-6" stroke="#666" stroke-width="1.600"/>
<!-- floating net monitor -->
<rect x="1770" y="464" width="124" height="47" rx="23.500" fill="#eee" stroke="#e4e4e4"/>
<rect x="1770" y="464" width="124" height="47" rx="23.500" fill="none" stroke="#bbb" stroke-opacity=".4" stroke-width="2"/>
<circle cx="1766" cy="486" r="29" fill="#ececec" stroke="#aaa"/>
<circle cx="1766" cy="486" r="26" fill="#4ccb5c"/>
<path d="M1740 486a26 26 0 0 1 52 0z" fill="#0d7f45"/>
<ellipse cx="1766" cy="466" rx="10" ry="3" fill="#3d9a6c"/>
<text x="1766" y="492" text-anchor="middle" font-size="17" fill="#fff" font-family="Liberation Sans">46%</text>
<path d="M1804 482v-7M1800 479l4-5 4 5" stroke="#f05a3c" stroke-width="2"/>
<path d="M1804 492v7M1800 495l4 5 4-5" stroke="#2e9e5a" stroke-width="2"/>
<text x="1857" y="483" text-anchor="end" font-size="11.500" fill="#333" font-family="Liberation Sans">33.4K/s</text>
<text x="1857" y="502" text-anchor="end" font-size="11.500" fill="#333" font-family="Liberation Sans">1.8M/s</text>
<circle cx="1874" cy="487" r="11" fill="#3a78dc"/>
<path d="M1868 487h12M1874 481v12" stroke="#fff" stroke-width="2.500"/>
<circle cx="1882" cy="480" r="5" fill="#e43030"/>
<!-- sogou bar -->
<rect x="1560" y="832.500" width="240" height="28.500" fill="#fff" stroke="#c8ccd4" stroke-width="1.500"/>
<path d="M1545 840l26-9 6 24-26 7-2-2z" fill="#f4541a"/>
<text x="1559" y="856" text-anchor="middle" font-size="25" font-weight="700" fill="#fff" font-family="Liberation Sans">S</text>
<text x="1593" y="853" text-anchor="middle" font-size="17" font-weight="700" fill="#1f78d1" font-family="Noto Sans CJK SC">中</text>
<circle cx="1615" cy="843" r="2.200" stroke="#1f78d1" stroke-width="1.500"/>
<path d="M1625 844v4q0 3-3 5" stroke="#1f78d1" stroke-width="2.500"/>
<circle cx="1647" cy="847" r="9" stroke="#1f78d1" stroke-width="1.800"/>
<circle cx="1644" cy="845" r="1.200" fill="#1f78d1"/><circle cx="1650" cy="845" r="1.200" fill="#1f78d1"/>
<path d="M1642 850q5 4 10 0" stroke="#1f78d1" stroke-width="1.400"/>
<rect x="1672" y="837" width="6" height="13" rx="3" fill="#1f78d1"/>
<path d="M1668 846q0 7 7 7t7-7M1675 853v4M1670 857h10" stroke="#1f78d1" stroke-width="1.600"/>
<rect x="1693.500" y="840" width="19" height="14" rx="2" fill="#1f78d1"/>
<path d="M1696 844h14M1696 847h14M1698 851h10" stroke="#fff" stroke-width="1.300" stroke-dasharray="1.500 1"/>
<circle cx="1729" cy="841" r="4" fill="#b8c8da"/><path d="M1723 856v-4q0-5 6-5t6 4v5z" fill="#b8c8da"/>
<rect x="1732" y="849" width="7" height="7" fill="#fff" stroke="#b8c8da"/>
<path d="M1751 840l5-2h6l5 2 3 4-3 3v9h-16v-9l-3-3z" fill="#1f78d1"/>
<rect x="1777" y="839" width="7" height="7" fill="#1f78d1"/><rect x="1786" y="838" width="7" height="7" fill="#7db5e8"/>
<rect x="1777" y="848" width="7" height="7" fill="#1f78d1"/><rect x="1786" y="848" width="7" height="7" fill="#1f78d1"/>
</svg>
</div>
</body></html>
